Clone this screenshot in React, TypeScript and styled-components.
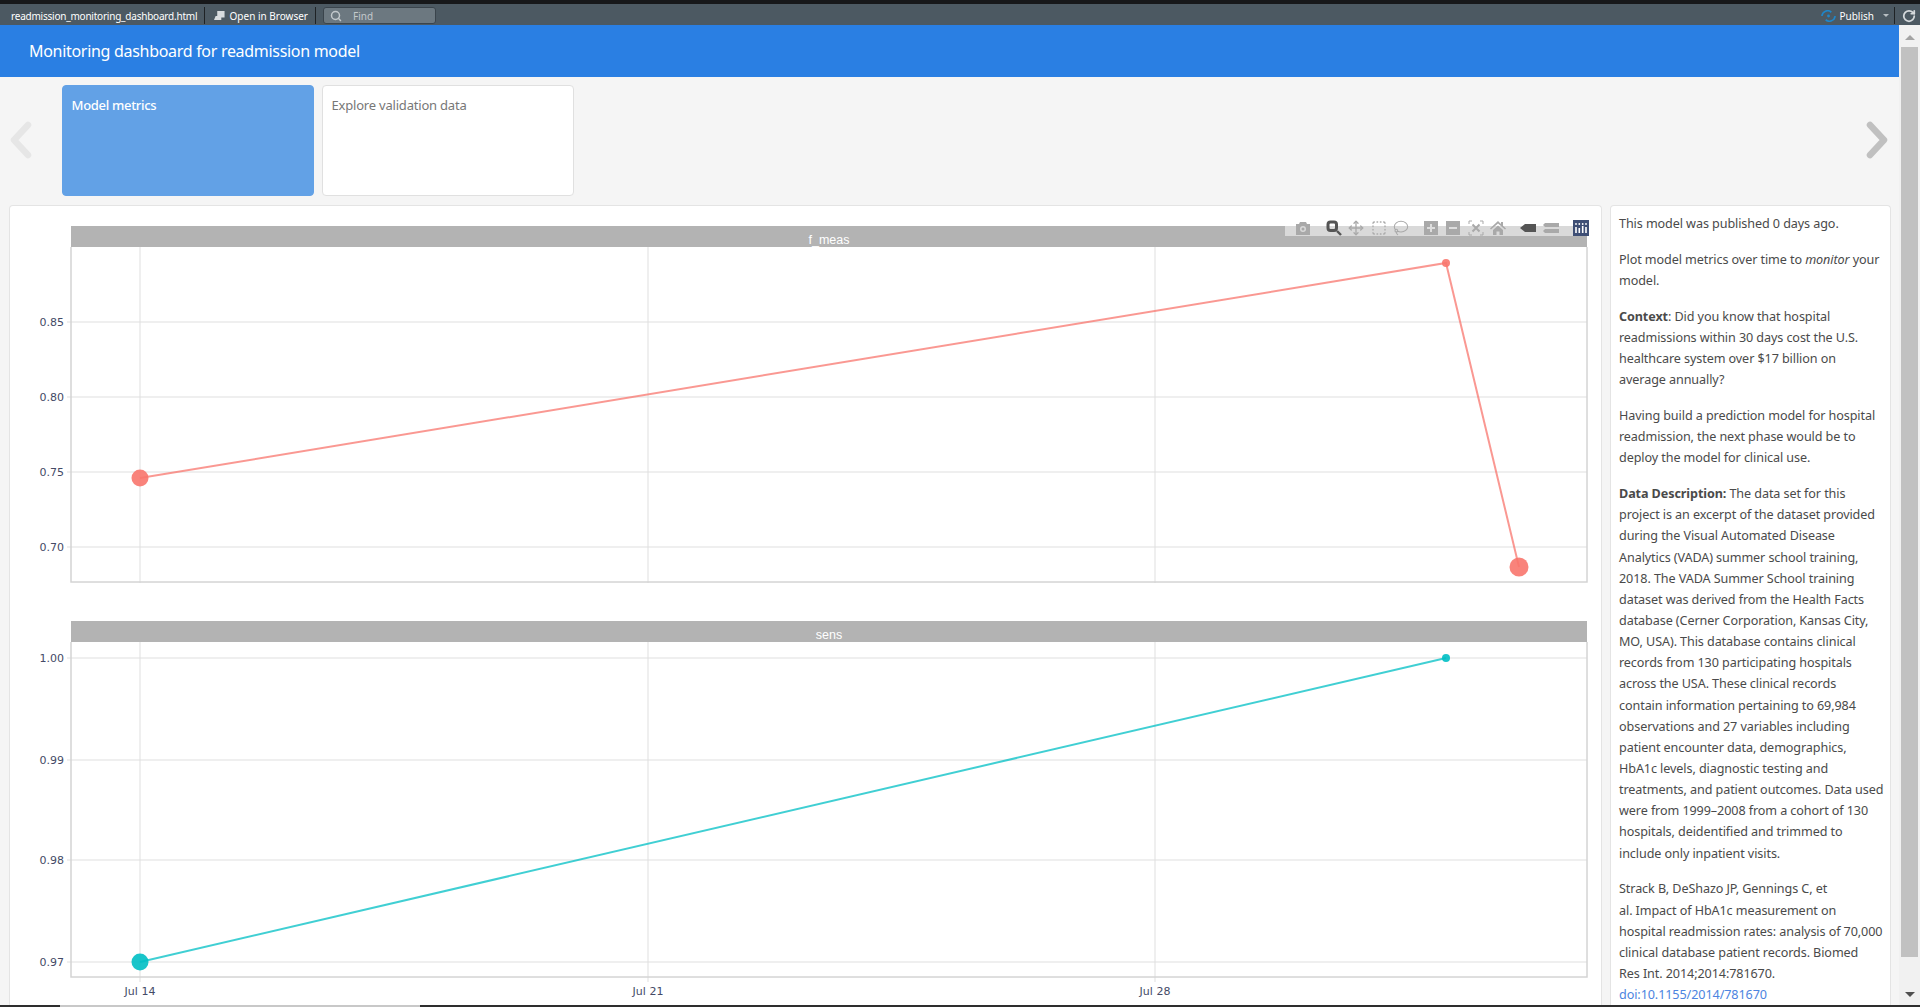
import React from "react";
import styled, { createGlobalStyle } from "styled-components";
import { Lasso, Move, RotateCw, Search, SquareDashed } from "lucide-react";

const GlobalStyle = createGlobalStyle`
  html, body { margin: 0; padding: 0; height: 100%; overflow: hidden; background: #f5f5f5; }
  * { box-sizing: border-box; }
`;

const sans = `"Noto Sans", "Liberation Sans", sans-serif`;

const Page = styled.div`
  position: relative;
  width: 1920px;
  height: 1007px;
  overflow: hidden;
  font-family: ${sans};
  display: flex;
  flex-direction: column;
`;

const TopBar = styled.div`
  height: 25px;
  flex: none;
  background: #4c5962;
  border-top: 4px solid #17181a;
  display: flex;
  align-items: center;
  padding: 2px 4px 0 11px;
  color: #fff;
  font-size: 10px;
`;

const FileName = styled.span`
  width: 186px;
  white-space: nowrap;
  letter-spacing: -0.22px;
`;

const BarDivider = styled.span`
  width: 1px;
  height: 17px;
  background: #1e2225;
  margin: 0 7px;
`;

const BarButton = styled.span`
  display: flex;
  align-items: center;
  gap: 3px;
  white-space: nowrap;
`;

const BrowserButton = styled(BarButton)`
  width: 96px;
  gap: 5px;
  padding-left: 2px;
`;

const FindBox = styled.div`
  width: 113px;
  height: 17px;
  background: #6c7880;
  border: 1px solid #3a444c;
  border-radius: 3px;
  display: flex;
  align-items: center;
  gap: 11px;
  padding-left: 6px;
  color: #c3c9cc;
`;

const BarSpacer = styled.div`
  flex: 1;
`;

const Caret = styled.span`
  width: 0;
  height: 0;
  border-left: 3px solid transparent;
  border-right: 3px solid transparent;
  border-top: 3px solid #b8bfc3;
  margin: 0 -2px 0 9px;
`;

const Body = styled.div`
  flex: 1;
  min-height: 0;
  display: flex;
`;

const Content = styled.div`
  width: 1899px;
  display: flex;
  flex-direction: column;
`;

const Header = styled.header`
  height: 52px;
  flex: none;
  background: #2a7fe3;
  color: #fff;
  display: flex;
  align-items: center;
  padding-left: 29px;
  font-size: 16px;
  letter-spacing: -0.3px;
`;

const TabRow = styled.div`
  height: 128px;
  flex: none;
  padding-top: 8px;
  display: flex;
  align-items: flex-start;
  position: relative;
`;

const Arrow = styled.svg<{ $side: "left" | "right" }>`
  position: absolute;
  top: 44px;
  ${(p) => (p.$side === "left" ? "left: 9px; color: #e6e6e6;" : "right: 10px; color: #c0c0c0;")}
`;

const Tabs = styled.div`
  display: flex;
  gap: 8px;
  margin-left: 61.5px;
`;

const Tab = styled.div<{ $active?: boolean }>`
  width: 252px;
  height: 111px;
  padding: 10px 9px;
  border-radius: 4px;
  font-size: 13px;
  letter-spacing: ${(p) => (p.$active ? "-0.3px" : "-0.2px")};
  background: ${(p) => (p.$active ? "#62a1e6" : "#fff")};
  color: ${(p) => (p.$active ? "#fff" : "#777")};
  border: 1px solid ${(p) => (p.$active ? "#62a1e6" : "#e0e0e0")};
  font-weight: ${(p) => (p.$active ? 500 : 400)};
`;

const Panels = styled.div`
  flex: 1;
  min-height: 0;
  display: flex;
  gap: 8px;
  padding-left: 9px;
`;

const ChartPanel = styled.section`
  position: relative;
  width: 1593px;
  background: #fff;
  border: 1px solid #e4e4e4;
  border-bottom: 0;
  border-radius: 4px 4px 0 0;
  padding-top: 20px;
`;

const Strip = styled.div`
  margin-left: 61px;
  width: 1516px;
  height: 21px;
  background: #b3b3b3;
  color: #fff;
  font-family: "Liberation Sans", sans-serif;
  font-size: 12.5px;
  text-align: center;
  line-height: 29px;
  overflow: hidden;
`;

const Facet = styled.div<{ $gap?: number }>`
  margin-top: ${(p) => p.$gap ?? 0}px;
`;

const ChartSvg = styled.svg`
  display: block;
`;

const ModeBar = styled.div`
  position: absolute;
  top: 19px;
  left: 1275px;
  width: 302px;
  height: 11px;
  background: rgba(255, 255, 255, 0.5);
`;

const ModeIcon = styled.span<{ $x: number; $dark?: boolean }>`
  position: absolute;
  top: -5px;
  left: ${(p) => p.$x - 8}px;
  width: 16px;
  height: 16px;
  color: ${(p) => (p.$dark ? "#555" : "#a9a9a9")};
  line-height: 0;
`;

const SidePanel = styled.aside`
  width: 281px;
  background: #fff;
  border: 1px solid #e4e4e4;
  border-bottom: 0;
  border-radius: 4px 4px 0 0;
  padding: 7px 7px 0 8px;
  color: #4a4a4a;
  font-size: 12.6px;
  letter-spacing: -0.09px;
  line-height: 21.14px;
  overflow: hidden;
  white-space: nowrap;
`;

const Para = styled.p`
  margin: 0 0 14.7px;
`;

const DoiLink = styled.a`
  color: #4c84e0;
  text-decoration: none;
`;

const ScrollTrack = styled.div`
  width: 21px;
  background: #f1f1f1;
  display: flex;
  flex-direction: column;
  align-items: center;
`;

const ScrollUp = styled.span`
  margin-top: 10px;
  border-left: 5px solid transparent;
  border-right: 5px solid transparent;
  border-bottom: 5px solid #a3a3a3;
`;

const ScrollThumb = styled.div`
  width: 17px;
  height: 910px;
  margin-top: 7px;
  background: #c1c1c1;
`;

const ScrollDown = styled.span`
  margin-top: 35px;
  border-left: 5px solid transparent;
  border-right: 5px solid transparent;
  border-top: 5px solid #505050;
`;

const BottomEdge = styled.div`
  position: absolute;
  left: 0;
  right: 0;
  bottom: 0;
  height: 2px;
  background: linear-gradient(to right, #2e2e2e 60px, #c8c8c8 60px, #c8c8c8 420px, #2e2e2e 420px);
`;

type Point = { x: number; y: number; r: number };

type FacetData = {
  name: string;
  color: string;
  height: number;
  yTicks: { label: string; y: number }[];
  points: Point[];
  xLabels?: boolean;
  gap?: number;
};

const xTicks = [
  { label: "Jul 14", x: 130 },
  { label: "Jul 21", x: 638 },
  { label: "Jul 28", x: 1145 },
];

// y positions are relative to the top of each plot area
const facets: FacetData[] = [
  {
    name: "f_meas",
    color: "#f8766d",
    height: 336,
    yTicks: [
      { label: "0.85", y: 75 },
      { label: "0.80", y: 150 },
      { label: "0.75", y: 225 },
      { label: "0.70", y: 300 },
    ],
    points: [
      { x: 130, y: 231, r: 8.5 },
      { x: 1436, y: 16, r: 4 },
      { x: 1509, y: 320, r: 9.5 },
    ],
  },
  {
    name: "sens",
    color: "#00bfc4",
    height: 336,
    gap: 38,
    xLabels: true,
    yTicks: [
      { label: "1.00", y: 16 },
      { label: "0.99", y: 118 },
      { label: "0.98", y: 218 },
      { label: "0.97", y: 320 },
    ],
    points: [
      { x: 130, y: 320, r: 8.5 },
      { x: 1436, y: 16, r: 4 },
    ],
  },
];

const plotLeft = 61;
const plotRight = 1577;

const FacetPlot = ({ data }: { data: FacetData }) => {
  const line = data.points.map((p) => `${p.x},${p.y}`).join(" ");
  return (
    <Facet $gap={data.gap}>
      <Strip>{data.name}</Strip>
      <ChartSvg width={1591} height={data.height + (data.xLabels ? 30 : 0)}>
        {xTicks.map((t) => (
          <line key={t.x} x1={t.x} x2={t.x} y1={0} y2={data.height + (data.xLabels ? 4 : 0)} stroke="#dfdfdf" />
        ))}
        {data.yTicks.map((t) => (
          <g key={t.label}>
            <line x1={plotLeft - 4} x2={plotRight} y1={t.y} y2={t.y} stroke="#dfdfdf" />
            <text x={plotLeft - 7} y={t.y + 4} textAnchor="end" fontFamily="DejaVu Sans" fontSize={11} fill="#444a66">
              {t.label}
            </text>
          </g>
        ))}
        <rect x={plotLeft} y={-1} width={plotRight - plotLeft} height={data.height} fill="none" stroke="#d4d4d4" strokeWidth={1.5} />
        <polyline points={line} fill="none" stroke={data.color} strokeOpacity={0.75} strokeWidth={2} />
        {data.points.map((p) => (
          <circle key={p.x} cx={p.x} cy={p.y} r={p.r} fill={data.color} fillOpacity={0.9} />
        ))}
        {data.xLabels &&
          xTicks.map((t) => (
            <text key={t.x} x={t.x} y={data.height + 17} textAnchor="middle" fontFamily="DejaVu Sans" fontSize={11} fill="#444a66">
              {t.label}
            </text>
          ))}
      </ChartSvg>
    </Facet>
  );
};

const CameraGlyph = () => (
  <svg width="16" height="16" viewBox="0 0 16 16" fill="currentColor">
    <path fillRule="evenodd" d="M1 4h3l1-2h6l1 2h3v11H1zM8 6a3 3 0 1 0 0 6 3 3 0 0 0 0-6z" />
    <circle cx="8" cy="9" r="1.5" />
  </svg>
);

const ZoomGlyph = () => (
  <svg width="16" height="16" viewBox="0 0 16 16" fill="none" stroke="currentColor">
    <rect x="2" y="2" width="8.500" height="8.500" rx="2.500" strokeWidth="3" />
    <path d="M11 11l4 4" strokeWidth="2.400" />
  </svg>
);

const SquareGlyph = ({ minus }: { minus?: boolean }) => (
  <svg width="14" height="14" viewBox="0 0 14 14" style={{ margin: 1 }}>
    <rect width="14" height="14" fill="currentColor" />
    <rect x="3" y="6" width="8" height="2" fill="#ddd" />
    {!minus && <rect x="6" y="3" width="2" height="8" fill="#ddd" />}
  </svg>
);

const AutoscaleGlyph = () => (
  <svg width="16" height="16" viewBox="0 0 16 16" fill="none" stroke="currentColor" strokeWidth="1">
    <path d="M1 4V1h3M12 1h3v3M15 12v3h-3M4 15H1v-3" />
    <path d="M4.500 4.500l7 7M11.500 4.500l-7 7" strokeWidth="2" />
  </svg>
);

const HomeGlyph = () => (
  <svg width="16" height="16" viewBox="0 0 16 16" fill="currentColor">
    <path d="M8 1L0 8.500l1 1L8 3.500l7 6 1-1-3-2.800V2h-2v1.900z" />
    <path d="M3 10l5-4.500 5 4.500v5H9.500v-3.500h-3V15H3z" />
  </svg>
);

const TagGlyph = () => (
  <svg width="16" height="16" viewBox="0 0 16 16" fill="currentColor">
    <path d="M0 8l5-4h11v8H5z" />
  </svg>
);

const CompareGlyph = () => (
  <svg width="16" height="16" viewBox="0 0 16 16" fill="currentColor">
    <path d="M2 3h14v4H2L0 5zM2 9h14v4H2L0 11z" />
  </svg>
);

const PlotlyGlyph = () => (
  <svg width="16" height="16" viewBox="0 0 16 16">
    <rect width="16" height="16" fill="#3f4f75" />
    <g stroke="#fff" strokeWidth="1.6">
      <path d="M3 7v6M6.300 8v5M9.700 6v7M13 7v6" />
    </g>
    <g fill="#fff">
      <circle cx="3" cy="4" r="0.9" />
      <circle cx="6.300" cy="4" r="0.9" />
      <circle cx="9.700" cy="4" r="0.9" />
      <circle cx="13" cy="4" r="0.9" />
    </g>
  </svg>
);

const PublishGlyph = () => (
  <svg width="15" height="12" viewBox="0 0 16 12" fill="none" stroke="#1f86c9" strokeWidth="1.8">
    <path d="M1 6a6 6 0 0 1 10-4M15 6a6 6 0 0 1-10 4" />
    <circle cx="8" cy="6" r="1.500" fill="#1f86c9" stroke="none" />
  </svg>
);

const BrowserGlyph = () => (
  <svg width="13" height="11" viewBox="0 0 13 11" fill="#d8dcdf">
    <path d="M4 0h9v8H9v3H0l2-5h2z" />
  </svg>
);

const NavArrow = ({ side }: { side: "left" | "right" }) => (
  <Arrow $side={side} width="24" height="38" viewBox="0 0 24 38" fill="none" stroke="currentColor" strokeWidth="6.500" strokeLinecap="round" strokeLinejoin="round">
    <polyline points={side === "left" ? "19,4 5,19 19,34" : "5,4 19,19 5,34"} />
  </Arrow>
);

export default function App() {
  return (
    <Page>
      <GlobalStyle />
      <TopBar>
        <FileName>readmission_monitoring_dashboard.html</FileName>
        <BarDivider />
        <BrowserButton>
          <BrowserGlyph />
          Open in Browser
        </BrowserButton>
        <BarDivider />
        <FindBox>
          <Search size={12} strokeWidth={3} color="#c3c9cc" />
          Find
        </FindBox>
        <BarSpacer />
        <BarButton>
          <PublishGlyph />
          Publish
        </BarButton>
        <Caret />
        <BarDivider />
        <RotateCw size={14} strokeWidth={3} color="#d5d9dc" />
      </TopBar>
      <Body>
        <Content>
          <Header>Monitoring dashboard for readmission model</Header>
          <TabRow>
            <NavArrow side="left" />
            <Tabs>
              <Tab $active>Model metrics</Tab>
              <Tab>Explore validation data</Tab>
            </Tabs>
            <NavArrow side="right" />
          </TabRow>
          <Panels>
            <ChartPanel>
              {facets.map((f) => (
                <FacetPlot key={f.name} data={f} />
              ))}
              <ModeBar>
                <ModeIcon $x={18}><CameraGlyph /></ModeIcon>
                <ModeIcon $x={49} $dark><ZoomGlyph /></ModeIcon>
                <ModeIcon $x={71}><Move size={16} strokeWidth={2} /></ModeIcon>
                <ModeIcon $x={94}><SquareDashed size={16} strokeWidth={2} /></ModeIcon>
                <ModeIcon $x={116}><Lasso size={16} strokeWidth={1.6} /></ModeIcon>
                <ModeIcon $x={146}><SquareGlyph /></ModeIcon>
                <ModeIcon $x={168}><SquareGlyph minus /></ModeIcon>
                <ModeIcon $x={191}><AutoscaleGlyph /></ModeIcon>
                <ModeIcon $x={213}><HomeGlyph /></ModeIcon>
                <ModeIcon $x={243} $dark><TagGlyph /></ModeIcon>
                <ModeIcon $x={266}><CompareGlyph /></ModeIcon>
                <ModeIcon $x={296}><PlotlyGlyph /></ModeIcon>
              </ModeBar>
            </ChartPanel>
            <SidePanel>
              <Para>This model was published 0 days ago.</Para>
              <Para>
                Plot model metrics over time to <em>monitor</em> your
                <br />
                model.
              </Para>
              <Para>
                <strong>Context</strong>: Did you know that hospital
                <br />
                readmissions within 30 days cost the U.S.
                <br />
                healthcare system over $17 billion on
                <br />
                average annually?
              </Para>
              <Para>
                Having build a prediction model for hospital
                <br />
                readmission, the next phase would be to
                <br />
                deploy the model for clinical use.
              </Para>
              <Para>
                <strong>Data Description:</strong> The data set for this
                <br />
                project is an excerpt of the dataset provided
                <br />
                during the Visual Automated Disease
                <br />
                Analytics (VADA) summer school training,
                <br />
                2018. The VADA Summer School training
                <br />
                dataset was derived from the Health Facts
                <br />
                database (Cerner Corporation, Kansas City,
                <br />
                MO, USA). This database contains clinical
                <br />
                records from 130 participating hospitals
                <br />
                across the USA. These clinical records
                <br />
                contain information pertaining to 69,984
                <br />
                observations and 27 variables including
                <br />
                patient encounter data, demographics,
                <br />
                HbA1c levels, diagnostic testing and
                <br />
                treatments, and patient outcomes. Data used
                <br />
                were from 1999–2008 from a cohort of 130
                <br />
                hospitals, deidentified and trimmed to
                <br />
                include only inpatient visits.
              </Para>
              <Para>
                Strack B, DeShazo JP, Gennings C, et
                <br />
                al. Impact of HbA1c measurement on
                <br />
                hospital readmission rates: analysis of 70,000
                <br />
                clinical database patient records. Biomed
                <br />
                Res Int. 2014;2014:781670.
                <br />
                <DoiLink href="#">doi:10.1155/2014/781670</DoiLink>
              </Para>
            </SidePanel>
          </Panels>
        </Content>
        <ScrollTrack>
          <ScrollUp />
          <ScrollThumb />
          <ScrollDown />
        </ScrollTrack>
      </Body>
      <BottomEdge />
    </Page>
  );
}
